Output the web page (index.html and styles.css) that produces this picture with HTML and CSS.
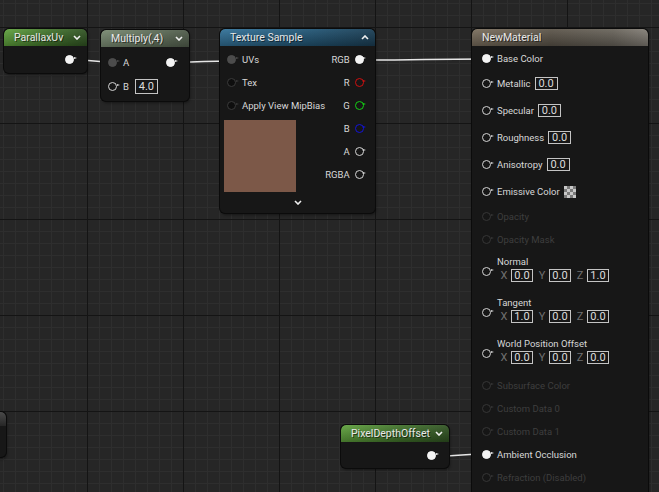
FILE: index.html
```html
<!DOCTYPE html>
<html>
<head>
<meta charset="utf-8">
<link rel="stylesheet" href="styles.css">
</head>
<body>
<div class="canvas">
  <svg class="wires" width="659" height="492" viewBox="0 0 659 492">
    <path d="M76 60 C94 60 94 62 112 62"/>
    <path d="M177 62 C204 62 204 61 231 61"/>
    <path d="M364 60 C425 60 425 59 486 59"/>
    <path d="M439 456 C462 456 462 454 486 454"/>
  </svg>

  <div class="node n-stub">
    <div class="head head-stub"></div>
  </div>

  <div class="node n-parallax">
    <div class="head head-green">
      <span class="title">ParallaxUv</span>
      <svg class="chev" width="8" height="5" viewBox="0 0 8 5"><polyline points="1,1 4,4 7,1"/></svg>
    </div>
    <div class="body body-out">
      <span class="pin pin-fill"></span>
    </div>
  </div>

  <div class="node n-multiply">
    <div class="head head-mult">
      <span class="title">Multiply(,4)</span>
      <svg class="chev" width="8" height="5" viewBox="0 0 8 5"><polyline points="1,1 4,4 7,1"/></svg>
    </div>
    <div class="body mult-body">
      <div class="row">
        <span class="pin pin-grey"></span><span class="lbl">A</span>
        <span class="pin pin-fill out"></span>
      </div>
      <div class="row">
        <span class="pin"></span><span class="lbl">B</span><span class="val">4.0</span>
      </div>
    </div>
  </div>

  <div class="node n-texture">
    <div class="head head-blue">
      <span class="title">Texture Sample</span>
      <svg class="chev" width="8" height="5" viewBox="0 0 8 5"><polyline points="1,4 4,1 7,4"/></svg>
    </div>
    <div class="tex-body">
      <div class="tex-in">
        <div class="row"><span class="pin pin-grey"></span><span class="lbl">UVs</span></div>
        <div class="row"><span class="pin pin-dim"></span><span class="lbl">Tex</span></div>
        <div class="row"><span class="pin pin-dim"></span><span class="lbl">Apply View MipBias</span></div>
        <div class="preview"></div>
      </div>
      <div class="tex-out">
        <div class="row"><span class="lbl">RGB</span><span class="pin pin-fill"></span></div>
        <div class="row"><span class="lbl">R</span><span class="pin pin-red"></span></div>
        <div class="row"><span class="lbl">G</span><span class="pin pin-green"></span></div>
        <div class="row"><span class="lbl">B</span><span class="pin pin-blue"></span></div>
        <div class="row"><span class="lbl">A</span><span class="pin"></span></div>
        <div class="row"><span class="lbl">RGBA</span><span class="pin"></span></div>
      </div>
    </div>
    <div class="tex-foot">
      <svg class="chev" width="8" height="5" viewBox="0 0 8 5"><polyline points="1,1 4,4 7,1"/></svg>
    </div>
  </div>

  <div class="node n-material">
    <div class="head head-mat">
      <span class="title">NewMaterial</span>
    </div>
    <div class="mat-body">
      <div class="mrow"><span class="pin pin-fill"></span><span class="lbl">Base Color</span></div>
      <div class="mrow tall"><span class="pin"></span><span class="lbl">Metallic</span><span class="val">0.0</span></div>
      <div class="mrow tall"><span class="pin"></span><span class="lbl">Specular</span><span class="val">0.0</span></div>
      <div class="mrow tall"><span class="pin"></span><span class="lbl">Roughness</span><span class="val">0.0</span></div>
      <div class="mrow tall"><span class="pin"></span><span class="lbl">Anisotropy</span><span class="val">0.0</span></div>
      <div class="mrow tall"><span class="pin"></span><span class="lbl">Emissive Color</span><span class="checker"></span></div>
      <div class="mrow off"><span class="pin"></span><span class="lbl">Opacity</span></div>
      <div class="mrow off"><span class="pin"></span><span class="lbl">Opacity Mask</span></div>
      <div class="vrow">
        <span class="pin"></span>
        <div class="vcol">
          <span class="lbl">Normal</span>
          <div class="vec">
            <span class="axis">X</span><span class="val">0.0</span>
            <span class="axis">Y</span><span class="val">0.0</span>
            <span class="axis">Z</span><span class="val">1.0</span>
          </div>
        </div>
      </div>
      <div class="vrow">
        <span class="pin"></span>
        <div class="vcol">
          <span class="lbl">Tangent</span>
          <div class="vec">
            <span class="axis">X</span><span class="val">1.0</span>
            <span class="axis">Y</span><span class="val">0.0</span>
            <span class="axis">Z</span><span class="val">0.0</span>
          </div>
        </div>
      </div>
      <div class="vrow">
        <span class="pin"></span>
        <div class="vcol">
          <span class="lbl">World Position Offset</span>
          <div class="vec">
            <span class="axis">X</span><span class="val">0.0</span>
            <span class="axis">Y</span><span class="val">0.0</span>
            <span class="axis">Z</span><span class="val">0.0</span>
          </div>
        </div>
      </div>
      <div class="mrow off"><span class="pin"></span><span class="lbl">Subsurface Color</span></div>
      <div class="mrow off"><span class="pin"></span><span class="lbl">Custom Data 0</span></div>
      <div class="mrow off"><span class="pin"></span><span class="lbl">Custom Data 1</span></div>
      <div class="mrow"><span class="pin pin-fill"></span><span class="lbl">Ambient Occlusion</span></div>
      <div class="mrow off"><span class="pin"></span><span class="lbl">Refraction (Disabled)</span></div>
    </div>
  </div>

  <div class="node n-pdo">
    <div class="head head-green">
      <span class="title">PixelDepthOffset</span>
      <svg class="chev" width="8" height="5" viewBox="0 0 8 5"><polyline points="1,1 4,4 7,1"/></svg>
    </div>
    <div class="body body-out">
      <span class="pin pin-fill"></span>
    </div>
  </div>
</div>
</body>
</html>
```

FILE: styles.css
```css
* { box-sizing: border-box; }

html, body {
  margin: 0;
  padding: 0;
  background: #262626;
}

.canvas {
  position: relative;
  width: 659px;
  height: 492px;
  overflow: hidden;
  font-family: Roboto, "Liberation Sans", sans-serif;
  color: #d6d6d6;
  background-color: #262626;
  background-image:
    linear-gradient(to right, #141414 1px, transparent 1px),
    linear-gradient(to bottom, #141414 1px, transparent 1px),
    linear-gradient(to right, #2e2e2e 1px, transparent 1px),
    linear-gradient(to bottom, #2e2e2e 1px, transparent 1px);
  background-size: 96px 96px, 96px 96px, 12px 12px, 12px 12px;
  background-position: 87px 27px, 87px 27px, 3px 3px, 3px 3px;
}

.wires {
  position: absolute;
  left: 0;
  top: 0;
}
.wires path {
  fill: none;
  stroke: #e6e6e6;
  stroke-width: 1.6;
}

/* ---------- nodes ---------- */
.node {
  position: absolute;
  display: flex;
  flex-direction: column;
  background: #171717;
  border-radius: 5px;
  box-shadow: 0 0 0 1px #0b0b0b, 1px 2px 3px rgba(0, 0, 0, 0.45);
  overflow: hidden;
}

.head {
  height: 17px;
  flex: none;
  display: flex;
  align-items: center;
  justify-content: space-between;
  padding: 0 6px 0 10px;
  border-radius: 5px 5px 0 0;
}
.title {
  font-size: 10.5px;
  color: #e8e8e8;
  text-shadow: 1px 1px 0 rgba(0, 0, 0, 0.55);
  white-space: nowrap;
}
.chev polyline {
  fill: none;
  stroke: #f0f0f0;
  stroke-width: 1.6;
}

.head-green {
  background:
    linear-gradient(to bottom, rgba(255, 255, 255, 0.08), rgba(0, 0, 0, 0.28)),
    linear-gradient(to right, #5fa23c, #3f7129 55%, #2f5221);
}
.head-mult {
  background:
    linear-gradient(to bottom, rgba(255, 255, 255, 0.06), rgba(0, 0, 0, 0.25)),
    linear-gradient(to right, #798a72, #5f6e59 60%, #505c4b);
}
.head-blue {
  background:
    linear-gradient(to bottom, rgba(255, 255, 255, 0.06), rgba(0, 0, 0, 0.3)),
    linear-gradient(to right, #33739a, #235878 55%, #1b3f56);
}
.head-mat {
  padding-left: 10px;
  background:
    linear-gradient(to bottom, rgba(255, 255, 255, 0.06), rgba(0, 0, 0, 0.3)),
    linear-gradient(to right, #7c705f, #5d564b 45%, #6a655c 80%, #858078);
}
.head-stub {
  background: linear-gradient(to bottom, #4a4a4a, #262626);
  height: 14px;
}

.n-stub { left: -60px; top: 412px; width: 66px; height: 45px; }
.n-parallax { left: 4px; top: 29px; width: 83px; height: 44px; }
.n-multiply { left: 101px; top: 30px; width: 88px; height: 71px; }
.n-texture { left: 220px; top: 29px; width: 155px; height: 184px; }
.n-material { left: 472px; top: 29px; width: 176px; height: 480px; }
.n-pdo { left: 341px; top: 425px; width: 108px; height: 43px; }

.body-out {
  flex: 1;
  display: flex;
  align-items: center;
  justify-content: flex-end;
  padding-right: 10px;
}

/* ---------- pins ---------- */
.pin {
  position: relative;
  flex: none;
  width: 9px;
  height: 9px;
  border-radius: 50%;
  border: 1.7px solid #d4d4d4;
  background: #161616;
  margin-right: 3px;
}
.pin::after {
  content: "";
  position: absolute;
  left: 7.5px;
  top: 1.3px;
  border-left: 3px solid #d4d4d4;
  border-top: 1.6px solid transparent;
  border-bottom: 1.6px solid transparent;
}
.pin-fill { background: #f4f4f4; border-color: #f4f4f4; }
.pin-fill::after { border-left-color: #f4f4f4; }
.pin-grey { background: #4c4c4c; border-color: #4c4c4c; }
.pin-grey::after { border-left-color: #4c4c4c; }
.pin-dim { border-color: #3a3a3a; background: #0e0e0e; }
.pin-dim::after { border-left-color: #3a3a3a; }
.pin-red { border-color: #d01010; }
.pin-red::after { border-left-color: #d01010; }
.pin-green { border-color: #14d014; }
.pin-green::after { border-left-color: #14d014; }
.pin-blue { border-color: #1414d8; }
.pin-blue::after { border-left-color: #1414d8; }

.lbl {
  font-size: 9.5px;
  color: #d8d8d8;
  white-space: nowrap;
}

.val {
  flex: none;
  display: inline-flex;
  align-items: center;
  justify-content: center;
  height: 13px;
  min-width: 23px;
  padding: 0 2px;
  border: 1px solid #c4c4c4;
  font-size: 11px;
  color: #dcdcdc;
}

/* ---------- multiply ---------- */
.mult-body {
  display: flex;
  flex-direction: column;
  padding: 3px 11px 0 7px;
}
.mult-body .row {
  height: 24px;
  display: flex;
  align-items: center;
  gap: 3px;
}
.mult-body .val { height: 15px; margin-left: 3px; }
.mult-body .out { margin-left: auto; }

/* ---------- texture sample ---------- */
.tex-body {
  display: flex;
  justify-content: space-between;
  padding: 2px 11px 0 7px;
}
.tex-in, .tex-out {
  display: flex;
  flex-direction: column;
}
.tex-body .row {
  height: 23px;
  display: flex;
  align-items: center;
  gap: 3px;
}
.tex-out .row { justify-content: flex-end; gap: 5px; }
.preview {
  width: 72px;
  height: 72px;
  margin: 3px 0 0 -3px;
  background: #7c5848;
}
.tex-foot {
  flex: 1;
  display: flex;
  align-items: center;
  justify-content: center;
}

/* ---------- material ---------- */
.mat-body {
  display: flex;
  flex-direction: column;
  padding: 1px 0 0 10px;
}
.mrow {
  height: 23px;
  display: flex;
  align-items: center;
  gap: 3px;
}
.mrow.tall { height: 27px; }
.mrow .val { margin-left: 1px; }
.off .lbl { color: #3e3e3e; }
.off .pin { border-color: #363636; }
.off .pin::after { border-left-color: #363636; }

.checker {
  width: 12px;
  height: 12px;
  margin-left: 1px;
  background-color: #c8c8c8;
  background-image:
    linear-gradient(45deg, #7a7a7a 25%, transparent 25%, transparent 75%, #7a7a7a 75%),
    linear-gradient(45deg, #7a7a7a 25%, transparent 25%, transparent 75%, #7a7a7a 75%);
  background-size: 6px 6px;
  background-position: 0 0, 3px 3px;
}

.vrow {
  height: 41px;
  display: flex;
  align-items: center;
  gap: 3px;
}
.vcol {
  align-self: flex-start;
  display: flex;
  flex-direction: column;
  padding-top: 5px;
}
.vcol .lbl { line-height: 12px; }
.vec {
  display: flex;
  align-items: center;
  margin-top: 1px;
  padding-left: 3px;
}
.axis {
  width: 8px;
  text-align: center;
  font-size: 11px;
  color: #707070;
  margin-right: 3px;
}
.vec .val { width: 22px; min-width: 22px; margin-right: 5px; }
```
